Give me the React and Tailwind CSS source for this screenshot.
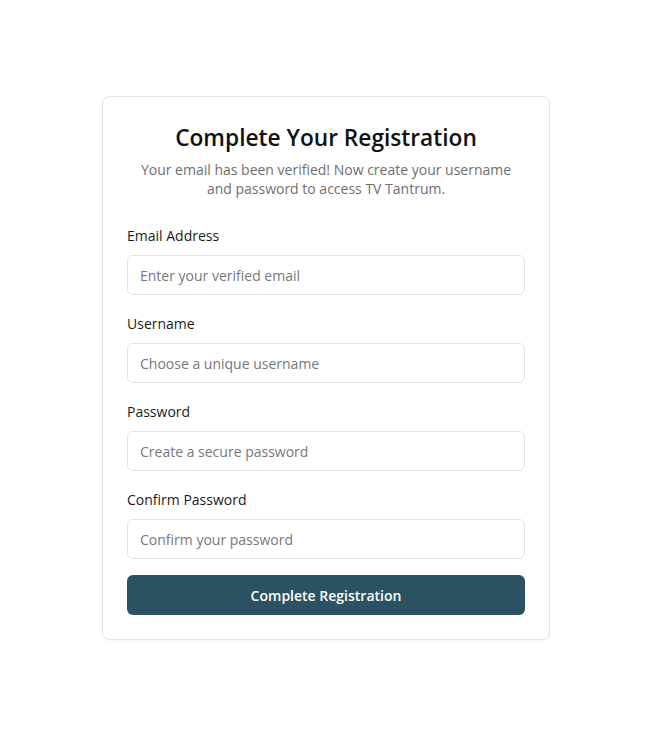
export default function App() {
  const fields = [
    { label: "Email Address", ph: "Enter your verified email", type: "email" },
    { label: "Username", ph: "Choose a unique username", type: "text" },
    { label: "Password", ph: "Create a secure password", type: "password" },
    { label: "Confirm Password", ph: "Confirm your password", type: "password" },
  ];
  return (
    <div className="min-h-screen bg-white flex justify-center pt-[96px] pl-[3px]" style={{ fontFamily: '"Open Sans", sans-serif' }}>
      <div className="w-[448px] h-fit border border-[#e4e4e4] rounded-lg bg-white shadow-[0_1px_2px_rgba(0,0,0,0.04)] px-6 pt-[25px] pb-6">
        <h1 className="text-center text-[22.7px] leading-8 font-semibold text-[#111]">Complete Your Registration</h1>
        <p className="mt-[6px] text-center text-[14px] leading-[19px] text-[#6f6f6f]">
          Your email has been verified! Now create your username and password to access TV Tantrum.
        </p>
        <form className="mt-[28px] flex flex-col gap-[19px]">
          {fields.map((f) => (
            <div key={f.label} className="flex flex-col">
              <label className="text-[14px] leading-5 text-[#1a1a1a] mb-[9px]">{f.label}</label>
              <input
                type={f.type}
                placeholder={f.ph}
                className="h-10 w-full rounded-md border border-[#e2e2e2] px-3 text-[14px] text-[#222] placeholder:text-[#787878] outline-none"
              />
            </div>
          ))}
        </form>
        <button className="mt-4 h-10 w-full rounded-md bg-[#2a5262] text-white text-[14px] font-semibold">
          Complete Registration
        </button>
      </div>
    </div>
  );
}
